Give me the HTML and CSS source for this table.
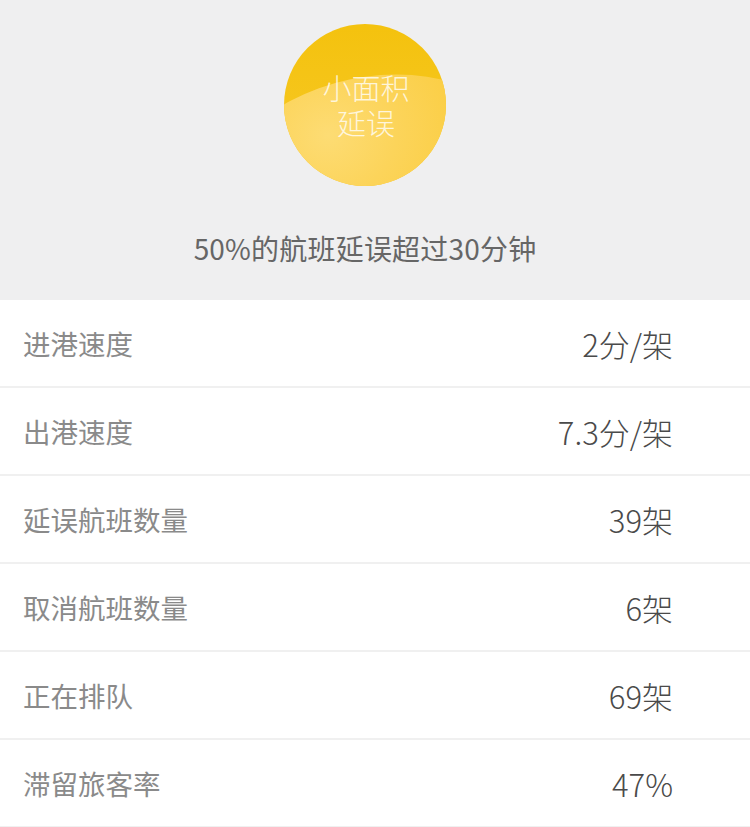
FILE: index.html
```html
<!DOCTYPE html>
<html lang="zh-CN">
<head>
<meta charset="utf-8">
<link rel="stylesheet" href="styles.css">
</head>
<body>
<div class="page">
  <section class="hero">
    <div class="badge">
      <div class="badge-text">
        <span class="badge-line">小面积</span>
        <span class="badge-line">延误</span>
      </div>
    </div>
    <p class="hero-note">50%的航班延误超过30分钟</p>
  </section>
  <ul class="stats">
    <li class="row"><span class="label">进港速度</span><span class="value">2分/架</span></li>
    <li class="row"><span class="label">出港速度</span><span class="value">7.3分/架</span></li>
    <li class="row"><span class="label">延误航班数量</span><span class="value">39架</span></li>
    <li class="row"><span class="label">取消航班数量</span><span class="value">6架</span></li>
    <li class="row"><span class="label">正在排队</span><span class="value">69架</span></li>
    <li class="row"><span class="label">滞留旅客率</span><span class="value">47%</span></li>
  </ul>
</div>
</body>
</html>
```

FILE: styles.css
```css
* { box-sizing: border-box; }
html, body { margin: 0; padding: 0; background: #ffffff; }
body {
  font-family: "Noto Sans CJK SC", "Noto Sans", sans-serif;
  width: 750px;
  height: 827px;
  overflow: hidden;
}
.page { display: flex; flex-direction: column; }

.hero {
  height: 300px;
  background: #efeff0;
  display: flex;
  flex-direction: column;
  align-items: center;
  padding: 24px 20px 0 0;
}
.badge {
  position: relative;
  width: 162px;
  height: 162px;
  border-radius: 50%;
  overflow: hidden;
  background: linear-gradient(180deg, #f4c20e 0%, #f6c61e 60%, #f7c42c 100%);
  display: flex;
  align-items: center;
  justify-content: center;
}
.badge::before {
  content: "";
  position: absolute;
  left: -45%;
  top: 33%;
  width: 200%;
  height: 140%;
  border-radius: 50%;
  transform: rotate(-12deg);
  background: radial-gradient(ellipse at 40% 22%, #fddc74 0%, #fcd45a 25%, #fbcf48 45%, #f8c538 60%);
}
.badge-text {
  position: relative;
  display: flex;
  flex-direction: column;
  align-items: center;
  color: rgba(255, 255, 255, 0.78);
  font-size: 29px;
  font-weight: 300;
  margin-left: 2px;
}
.badge-line {
  display: block;
  height: 35px;
  line-height: 35px;
}
.hero-note {
  margin: 42px 0 0;
  font-size: 28px;
  line-height: 40px;
  color: #666666;
  letter-spacing: 0.2px;
}

.stats { list-style: none; margin: 0; padding: 0; }
.row {
  height: 88px;
  border-bottom: 2px solid #f0f0f0;
  display: flex;
  align-items: center;
  justify-content: space-between;
  padding: 0 77px 0 23px;
}
.label {
  font-size: 27.5px;
  color: #8a8a8a;
}
.value {
  font-size: 31px;
  font-weight: 300;
  color: #4a4a4a;
}
```
